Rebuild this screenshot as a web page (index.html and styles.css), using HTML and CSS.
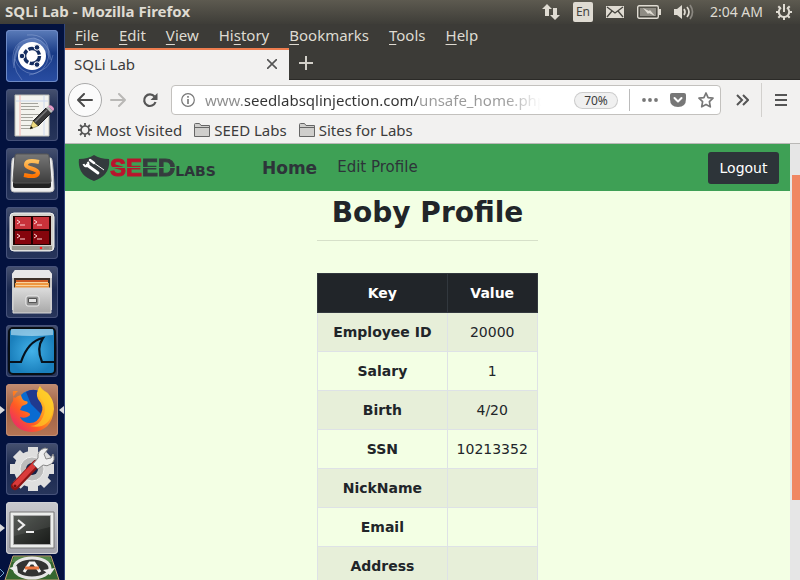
FILE: index.html
```html
<!DOCTYPE html>
<html lang="en">
<head>
<meta charset="utf-8">
<title>SQLi Lab</title>
<link rel="stylesheet" href="styles.css">
</head>
<body>
<header class="panel">
  <span class="panel-title">SQLi Lab - Mozilla Firefox</span>
  <div class="indicators">
    <svg class="ind-net" width="18" height="16" viewBox="0 0 18 16" fill="#dfdbd2"><path d="M5 0l5 5H7v7H3V5H0zM13 16l-5-5h3V4h4v7h3z"/></svg>
    <span class="lang">En</span>
    <svg class="ind-mail" width="18" height="12" viewBox="0 0 18 12"><path fill="#dfdbd2" d="M0 0h18v12H0z"/><path d="M1 1l8 6 8-6M1 11l5-6M17 11l-5-6" fill="none" stroke="#45443e" stroke-width="1.3"/></svg>
    <svg class="ind-battery" width="24" height="14" viewBox="0 0 24 14"><rect x=".7" y=".7" width="20.6" height="12.6" rx="1.5" fill="none" stroke="#dfdbd2" stroke-width="1.4"/><path fill="#8e8b83" d="M3 3h16v8H3z"/><path fill="#dfdbd2" d="M22 4h2v6h-2zM6 3l6 3 1-1 5 6-6-3-1 1z"/></svg>
    <svg class="ind-volume" width="20" height="16" viewBox="0 0 20 16"><path fill="#dfdbd2" d="M0 5h3l5-4v14l-5-4H0z"/><g fill="none" stroke-width="1.7"><path stroke="#dfdbd2" d="M10 5q2 3 0 6M13 3q4 5 0 10"/><path stroke="#8a8780" d="M16 1q5 7 0 14"/></g></svg>
    <span class="clock">2:04 AM</span>
    <svg class="ind-power" width="16" height="16" viewBox="0 0 16 16"><g fill="none" stroke="#dfdbd2" stroke-width="2"><path d="M5 3.6a5.2 5.2 0 1 0 6 0M8 0v8"/><path d="M8 13v3M0 8h3M13 8h3M2.3 2.3l2 2M13.7 2.3l-2 2M2.3 13.7l2-2M13.7 13.7l-2-2"/></g></svg>
  </div>
</header>
<div class="desktop">
  <nav class="launcher" aria-label="Launcher">
    <button class="tile tile-dash" aria-label="Search">
      <svg viewBox="0 0 52 52"><g fill="none" stroke="#c3d2f2" stroke-opacity=".3" stroke-width="1"><path d="M8 38Q2 10 28 8Q44 12 45 30M16 50Q2 34 13 16M21 5Q43 3 43 26Q40 43 23 45M9 29Q13 42 27 44Q45 39 47 25"/></g><path fill="#9eb8eb" opacity=".3" d="M8 37Q5 8 29 8Q44 12 44 31Q36 9 21 14Q10 20 8 37"/><circle cx="26" cy="26" r="14" fill="#fff"/><circle cx="26" cy="26" r="7.500" fill="none" stroke="#142d60" stroke-width="3.400" stroke-dasharray="14 1.700"/><g fill="#142d60" stroke="#fff" stroke-width="1"><circle cx="16" cy="26" r="2.800"/><circle cx="31" cy="17.400" r="2.800"/><circle cx="31" cy="34.600" r="2.800"/></g></svg>
    </button>
    <button class="tile" aria-label="Text Editor">
      <svg viewBox="0 0 52 52"><path fill="#f3f3ee" stroke="#bcbdb4" d="M9 6h34v41H9z"/><path stroke="#f3b4b0" d="M14 6v41"/><path d="M38 6v41M10 12h32" stroke="#ccd9ee"/><g stroke="#a4a49d"><path d="M15 14.500h17M15 17.500h18M15 20.500h14M15 25.500h18M15 28.500h12M15 31.500h16M15 36.500h15M15 39.500h12"/></g><path fill="#3a3a3a" stroke="#1f1f1f" d="M27 32L40 19l5 5-13 13z"/><path stroke="#777" stroke-width="1.500" d="M29 33l12-12"/><path fill="#f1dc80" stroke="#6b642a" stroke-width=".5" d="M27 32l-3 8 8-3z"/><path d="M24 40l1-3 2 2z"/><path fill="#bbb" d="M40 19l2-2 5 5-2 2z"/><path fill="#e79bc7" d="M42 17q3-2 5 1 2 2 0 4z"/></svg>
    </button>
    <button class="tile" aria-label="Sublime Text">
      <svg viewBox="0 0 52 52"><defs><linearGradient id="sub" x2="0" y2="1"><stop stop-color="#777"/><stop offset="1" stop-color="#3d3d3d"/></linearGradient><linearGradient id="orange" x2="0" y2="1"><stop stop-color="#ffc15d"/><stop offset="1" stop-color="#ff7300"/></linearGradient></defs><path fill="#eee" stroke="#bbb" d="M7 10q-2 0-2 31 0 3 3 3h36q4 0 4-3Q47 10 45 10z"/><path fill="#222" d="M7 33h38v5q0 2-2 2H9q-2 0-2-2z"/><path fill="url(#sub)" stroke="#555" d="M11 6h30q2 0 2 2l2 25q0 2-2 2H9q-2 0-2-2L9 8q0-2 2-2"/><path fill="none" stroke="url(#orange)" stroke-width="4" d="M33 14q-13-3-13 3c0 4 12 3 12 8q-1 5-14 2"/></svg>
    </button>
    <button class="tile" aria-label="Terminator">
      <svg viewBox="0 0 52 52"><rect x="4" y="6" width="44" height="38" rx="4" fill="#d2d2cc" stroke="#f1f1ef"/><path fill="#999990" d="M6 39h40v4H6z"/><path fill="#230303" d="M7 9h38v29H7z"/><path fill="#c8323a" d="M9 10h16v12H9zM27 10h16v12H27z"/><path fill="#85050c" d="M9 24h16v13H9zM27 24h16v13H27z"/><g fill="none" stroke="#ffd4d4"><path d="M11 13l3 2-3 2M14 18h5M28 13l3 2-3 2M31 18h5M11 27l3 2-3 2M14 32h5M28 27l3 2-3 2M31 32h5"/></g><circle cx="35" cy="41" r="1.300" fill="#ff2020"/><path stroke="#85857d" d="M38 41h5"/></svg>
    </button>
    <button class="tile" aria-label="Files">
      <svg viewBox="0 0 52 52"><defs><linearGradient id="cab" x2="0" y2="1"><stop stop-color="#dcdcdc"/><stop offset="1" stop-color="#a8a8a8"/></linearGradient></defs><path fill="#c7c7c7" d="M6 8l3-4h34l3 4v36H6z"/><path fill="#e8e8e8" d="M6 8l3-4h34l3 4v4H6z"/><path fill="#3d312a" d="M8 12h36v11H8z"/><path fill="#d05c24" d="M10 14h32v9H10z"/><path fill="#ee9740" d="M9 17h34v6H9z"/><path stroke="#f8d29d" d="M10 16.500h32M10 19.500h32"/><path fill="url(#cab)" stroke="#d8d8d8" d="M7 22h38v25H7z"/><rect x="20" y="30" width="13" height="10" rx="2" fill="#8f8f8f" stroke="#eee"/><path fill="#e4e4e4" stroke="#555" d="M22.500 32.500h8v4h-8z"/></svg>
    </button>
    <button class="tile" aria-label="Wireshark">
      <svg viewBox="0 0 52 52"><defs><radialGradient id="sea"><stop stop-color="#43b2e9"/><stop offset="1" stop-color="#1a7fbc"/></radialGradient></defs><rect x="3" y="3" width="46" height="46" rx="4" fill="url(#sea)" stroke="#080e14" stroke-width="2"/><path fill="#d7f0fc" opacity=".55" d="M5 4h42v6Q26 12 5 10z"/><path fill="none" stroke="#06121d" stroke-width="2.200" d="M4 37h11Q22 16 37 13q-7 10-1 24h12"/></svg>
    </button>
    <button class="tile tile-firefox active" aria-label="Firefox">
      <svg viewBox="0 0 52 52"><defs><linearGradient id="fox" x1="1" y1="0" x2="0" y2="1"><stop stop-color="#fff44f"/><stop offset=".35" stop-color="#ffad20"/><stop offset=".65" stop-color="#ff5a24"/><stop offset="1" stop-color="#e31587"/></linearGradient></defs><circle cx="27" cy="23" r="17" fill="#096bd1"/><path fill="#203a8f" d="M20 8q10-6 19 4 8 9 0 22L25 20z"/><path fill="url(#fox)" d="M12 7Q7 11 7 17 3 22 4 29q3 18 22 19 20-1 22-23 0-10-7-16-7-4-7-7-5 7-2 13 7 8 3 15-3 9-11 9-8 0-10-6 5 2 9-1 3-2-2-4l-7-2 2-4 5-2q2-3-2-3-3-1-4-6-4 1-6 3-3-2-2-7"/><path fill="#ffcb24" opacity=".7" d="M34 2q-4 9 3 16 4 7 0 15-4 9-13 9 17 4 22-12 3-12-4-21-7-4-8-7"/></svg>
    </button>
    <button class="tile" aria-label="System Settings">
      <svg viewBox="0 0 52 52"><g fill="#dedede"><path d="M22 4h10v44H22zM4 21h44v10H4z"/><path d="M22 4h10v44H22zM4 21h44v10H4z" transform="rotate(45 26 26)"/><circle cx="26" cy="26" r="18"/></g><circle cx="26" cy="26" r="12" fill="#bcbcbc" stroke="#eee"/><circle cx="26" cy="26" r="6" fill="#142248"/><path stroke="#8d1414" stroke-width="8" stroke-linecap="round" d="M9 43l21-22"/><path stroke="#da3b3b" stroke-width="5" stroke-linecap="round" d="M9 42l20-21"/><path fill="#eee" stroke="#888" d="M27 21l5-6q-1-8 7-10l3 1-4 5 2 5 5-1 2-4q3 6-2 10-4 3-8 1l-5 4z"/><circle cx="9" cy="43" r="1.500" fill="#6b1010"/></svg>
    </button>
    <button class="tile tile-terminal running" aria-label="Terminal">
      <svg viewBox="0 0 52 52"><defs><linearGradient id="term" x2="1" y2="1"><stop stop-color="#494e49"/><stop offset="1" stop-color="#191b19"/></linearGradient></defs><path fill="#eceeec" stroke="#777" d="M4 10h44v36H4z"/><path fill="url(#term)" stroke="#aaa" d="M7.500 13.500h37v29h-37z"/><path fill="none" stroke="#eee" stroke-width="2.200" d="M12 18l6 5-6 5M20 30h8"/><path fill="#fff" opacity=".08" d="M8 14h36v11L8 34z"/></svg>
    </button>
    <button class="tile-folded" aria-label="Software Updater">
      <svg viewBox="0 0 64 25"><path fill="#35672f" stroke="#c3a276" d="M13 1h38l8 24H5z"/><path fill="#52864a" d="M14 2h36l2 5H12z"/><ellipse cx="32" cy="13" rx="18" ry="10" fill="#333" stroke="#e5e5e5" stroke-width="3"/><path fill="none" stroke="#f6f6f6" stroke-width="3" d="M24 17l6-9h4l6 9"/><path stroke="#e9753f" stroke-width="3" d="M25 13h14"/><path fill="#eee" d="M9 13l8-2 1 7zM55 13l-12 2 7 5z"/><path fill="none" stroke="#6fa4cf" d="M0 14l4 4-4 4"/></svg>
    </button>
  </nav>
  <section class="browser">
    <nav class="menubar">
      <button><u>F</u>ile</button><button><u>E</u>dit</button><button><u>V</u>iew</button><button>Hi<u>s</u>tory</button><button><u>B</u>ookmarks</button><button><u>T</u>ools</button><button><u>H</u>elp</button>
    </nav>
    <div class="tabs">
      <div class="tab"><span>SQLi Lab</span><button class="icon-btn" aria-label="Close tab"><svg width="10" height="10" viewBox="0 0 10 10"><path stroke="#555" stroke-width="1.600" d="M0 0l10 10M10 0L0 10"/></svg></button></div>
      <button class="icon-btn new-tab" aria-label="New tab"><svg width="14" height="14" viewBox="0 0 14 14"><path stroke="#d3d0c9" stroke-width="2" d="M7 0v14M0 7h14"/></svg></button>
    </div>
    <div class="toolbar">
      <button class="icon-btn back" aria-label="Back"><svg width="16" height="14" viewBox="0 0 16 14"><path fill="none" stroke="#4b4b4b" stroke-width="2" stroke-linecap="round" stroke-linejoin="round" d="M7 1L1 7l6 6M1 7h14"/></svg></button>
      <button class="icon-btn forward" aria-label="Forward"><svg width="16" height="14" viewBox="0 0 16 14"><path fill="none" stroke="#b9b8b6" stroke-width="2" stroke-linecap="round" stroke-linejoin="round" d="M9 1l6 6-6 6M15 7H1"/></svg></button>
      <button class="icon-btn reload" aria-label="Reload"><svg width="16" height="16" viewBox="0 0 16 16"><path fill="none" stroke="#555" stroke-width="2.200" d="M12.500 4.500A5.800 5.800 0 1 0 13.500 10"/><path fill="#555" d="M15.500 1v7h-7z"/></svg></button>
      <div class="urlbar">
        <svg width="14" height="14" viewBox="0 0 14 14"><circle cx="7" cy="7" r="6.300" fill="none" stroke="#777" stroke-width="1.200"/><path stroke="#777" stroke-width="1.600" d="M7 6v5M7 3v1.700"/></svg>
        <input class="url" type="text" aria-label="Address" value="www.seedlabsqlinjection.com/unsafe_home.php">
        <button class="zoom">70%</button>
        <span class="divider"></span>
        <button class="icon-btn" aria-label="Page actions"><svg width="16" height="4" viewBox="0 0 16 4" fill="#777"><circle cx="2" cy="2" r="1.900"/><circle cx="8" cy="2" r="1.900"/><circle cx="14" cy="2" r="1.900"/></svg></button>
        <button class="icon-btn" aria-label="Save to Pocket"><svg width="16" height="14" viewBox="0 0 16 14"><path fill="#777" d="M2 0h12q2 0 2 2v4q0 8-8 8T0 6V2q0-2 2-2"/><path fill="none" stroke="#fff" stroke-width="2" stroke-linecap="round" stroke-linejoin="round" d="M4.500 5L8 8.500 11.500 5"/></svg></button>
        <button class="icon-btn" aria-label="Bookmark this page"><svg width="16" height="16" viewBox="0 0 16 16"><path fill="none" stroke="#777" stroke-width="1.700" stroke-linejoin="round" d="M8 1l2.100 4.600 4.900.6-3.600 3.500.9 5.100L8 12.400l-4.300 2.400.9-5.100L1 6.200l4.900-.6z"/></svg></button>
      </div>
      <button class="icon-btn overflow" aria-label="More tools"><svg width="13" height="12" viewBox="0 0 13 12"><path fill="none" stroke="#555" stroke-width="2" d="M1 1l5 5-5 5M7 1l5 5-5 5"/></svg></button>
      <button class="icon-btn menu" aria-label="Open menu"><svg width="12" height="12" viewBox="0 0 12 12"><path stroke="#555" stroke-width="2" d="M0 1h12M0 6h12M0 11h12"/></svg></button>
    </div>
    <div class="bookmarks">
      <a href="#"><svg width="14" height="14" viewBox="0 0 14 14"><circle cx="7" cy="7" r="4" fill="none" stroke="#555" stroke-width="1.700"/><path stroke="#555" stroke-width="1.800" d="M7 0v3M7 11v3M0 7h3M11 7h3M2 2l2 2M10 10l2 2M12 2l-2 2M4 10l-2 2"/></svg>Most Visited</a>
      <a href="#"><svg width="16" height="14" viewBox="0 0 16 14"><path fill="#cfcecc" stroke="#666" d="M.5 13.500V1.500q0-1 1-1h4l1.500 2h8.500v11zM.5 4.500h15"/></svg>SEED Labs</a>
      <a href="#"><svg width="16" height="14" viewBox="0 0 16 14"><path fill="#cfcecc" stroke="#666" d="M.5 13.500V1.500q0-1 1-1h4l1.500 2h8.500v11zM.5 4.500h15"/></svg>Sites for Labs</a>
    </div>
    <div class="viewport">
      <div class="page">
        <nav class="site-nav">
          <a class="logo" href="#"><svg width="32" height="26" viewBox="0 0 32 26"><path fill="#333a3d" d="M16 0Q22 4 31 4q2 16-15 22Q-1 20 1 4q9 0 15-4"/><path stroke="#fff" stroke-width="2.800" stroke-linecap="round" d="M9 10l11 8"/><path fill="none" stroke="#fff" stroke-width="2" d="M5.500 9q1 3 4 2 2-2 0-4"/><path stroke="#fff" stroke-width="2.400" stroke-linecap="round" d="M12 5l4 3"/><path stroke="#fff" stroke-width="1" d="M16 8l10 7"/></svg><span class="logo-seed"><span class="logo-red">SE</span><span class="logo-dark">ED</span></span><span class="logo-labs">LABS</span></a>
          <a class="nav-home" href="#">Home</a>
          <a class="nav-edit" href="#">Edit Profile</a>
          <button class="logout">Logout</button>
        </nav>
        <main class="profile">
          <h1>Boby Profile</h1>
          <table>
            <thead><tr><th scope="col">Key</th><th scope="col">Value</th></tr></thead>
            <tbody>
              <tr><th scope="row">Employee ID</th><td>20000</td></tr>
              <tr><th scope="row">Salary</th><td>1</td></tr>
              <tr><th scope="row">Birth</th><td>4/20</td></tr>
              <tr><th scope="row">SSN</th><td>10213352</td></tr>
              <tr><th scope="row">NickName</th><td></td></tr>
              <tr><th scope="row">Email</th><td></td></tr>
              <tr><th scope="row">Address</th><td></td></tr>
            </tbody>
          </table>
        </main>
      </div>
      <div class="scrollbar"><div class="thumb"></div></div>
    </div>
  </section>
</div>
</body>
</html>
```
FILE: styles.css
```css
* { box-sizing: border-box; }
body {
  margin: 0;
  height: 100vh;
  display: flex;
  flex-direction: column;
  overflow: hidden;
  font: 15px/20px "Noto Sans", "Open Sans", sans-serif;
  color: #3c3c3c;
}
svg { display: block; flex: none; }
button { border: 0; padding: 0; background: none; font: inherit; color: inherit; }
a { color: inherit; text-decoration: none; }

.panel {
  flex: none;
  height: 24px;
  padding: 0 8px 0 5px;
  display: flex;
  align-items: center;
  justify-content: space-between;
  background: linear-gradient(#5d5a50, #3e3d38);
  color: #dfdbd2;
}
.panel-title { padding-bottom: 2px; font-weight: 700; }
.indicators { display: flex; align-items: center; gap: 13px; font-size: 14px; }
.lang {
  width: 20px;
  border-radius: 2px;
  background: #dfdbd2;
  color: #45443e;
  font-size: 12px;
  text-align: center;
}
.clock { padding-left: 3px; }

.desktop { flex: 1; min-height: 0; display: flex; }
.launcher {
  flex: none;
  width: 65px;
  padding-top: 6px;
  display: flex;
  flex-direction: column;
  align-items: center;
  gap: 7px;
  overflow: hidden;
  background: #03123f;
  border-right: 1px solid #32477c;
}
.tile {
  flex: none;
  position: relative;
  width: 52px;
  height: 52px;
  border-radius: 4px;
  background: linear-gradient(#46516f, #1b2950 45%, #27355b);
  box-shadow: inset 0 0 0 1px #46527a;
}
.tile svg { width: 52px; height: 52px; }
.tile-dash { background: linear-gradient(#5b7cb9, #193b87 45%, #294da2); box-shadow: inset 0 0 0 1px #6e8ac6; }
.tile-firefox { background: linear-gradient(#c18c71, #9e6042 45%, #b57555); box-shadow: inset 0 0 0 1px #c08c72; }
.tile-terminal { background: linear-gradient(#c8c9cd, #a1a2aa); box-shadow: inset 0 0 0 1px #cfd0d4; }
.active::before, .running::before, .active::after {
  content: "";
  position: absolute;
  top: 22px;
  border: 4px solid transparent;
}
.active::before, .running::before { left: -6px; border-left: 5px solid #d9dadd; border-right: 0; }
.active::after { right: -6px; border-right: 5px solid #d9dadd; border-left: 0; }
.tile-folded { flex: none; width: 64px; margin-top: -6px; }

.browser { flex: 1; min-width: 0; display: flex; flex-direction: column; background: #f2f1f0; }
.menubar {
  height: 24px;
  padding: 0 10px 2px;
  display: flex;
  align-items: center;
  gap: 20px;
  background: #3c3b37;
  color: #dfdbd2;
}
.menubar u { text-underline-offset: 3px; }
.tabs { height: 32px; display: flex; align-items: stretch; background: #3c3b37; border-bottom: 1px solid #2b2a27; }
.tab {
  width: 224px;
  margin-bottom: -1px;
  padding: 0 12px 2px 9px;
  display: flex;
  align-items: center;
  justify-content: space-between;
  background: #f2f1f0;
  border-top: 2px solid #ee7d4f;
}
.icon-btn { flex: none; display: flex; align-items: center; justify-content: center; }
.new-tab { width: 34px; padding-bottom: 2px; }
.toolbar { height: 40px; padding-left: 3px; display: flex; align-items: center; }
.back { width: 34px; height: 34px; border: 1px solid #aaa; border-radius: 50%; background: #fbfbfb; }
.forward { width: 32px; }
.reload { width: 32px; }
.urlbar {
  flex: 1;
  min-width: 0;
  height: 30px;
  margin-left: 5px;
  padding: 0 6px 0 9px;
  display: flex;
  align-items: center;
  gap: 12px;
  background: #fff;
  border: 1px solid #c3c1be;
  border-radius: 4px;
}
.url {
  flex: 1;
  min-width: 0;
  border: 0;
  padding: 0;
  outline: 0;
  margin: 0 22px 0 -2px;
  font: inherit;
  background: linear-gradient(90deg, #8c8c8c 40px, #333 40px, #333 215px, #999 215px, #999 300px, transparent 336px);
  background-clip: text;
  -webkit-background-clip: text;
  -webkit-text-fill-color: transparent;
}
.zoom {
  width: 42px;
  height: 15px;
  border-radius: 8px;
  background: #f0f0f0;
  box-shadow: 0 0 0 1px #ccc;
  font-size: 12px;
  line-height: 15px;
}
.divider { width: 1px; height: 22px; background: #bbb; }
.overflow { width: 40px; padding-left: 3px; }
.menu { width: 39px; height: 34px; border-left: 1px solid #d2d0cd; }
.bookmarks {
  height: 24px;
  padding: 0 13px 3px;
  display: flex;
  align-items: center;
  gap: 12px;
  border-bottom: 1px solid #b9b8b6;
}
.bookmarks a { display: flex; align-items: center; gap: 4px; white-space: nowrap; }

.viewport { flex: 1; min-height: 0; display: flex; overflow: hidden; }
.page { flex: 1; min-width: 0; background: #f3ffe4; color: #212529; font-family: "DejaVu Sans", sans-serif; font-size: 14px; }
.site-nav { height: 47px; padding: 0 11px 0 13px; display: flex; align-items: center; background: #3ea055; color: #2d3439; }
.logo { width: 184px; display: flex; align-items: center; font-weight: 700; }
.logo-seed { font: 700 24px/26px "Liberation Sans", sans-serif; }
.logo-seed span { background-clip: text; -webkit-background-clip: text; color: transparent; -webkit-text-stroke: 1px transparent; }
.logo-red { background-image: linear-gradient(#b9132c 13px, #3ea055 13px, #3ea055 14px, #b9132c 14px); }
.logo-dark { background-image: linear-gradient(#353c3e 13px, #3ea055 13px, #3ea055 14px, #353c3e 14px); }
.logo-labs { padding-top: 6px; }
.nav-home { font-size: 17px; font-weight: 700; }
.nav-edit { margin-left: 20px; padding-bottom: 2px; font-size: 15px; }
.logout { width: 71px; height: 32px; margin-left: auto; border-radius: 3px; background: #2d3439; color: #fff; }
.profile { width: max-content; margin: 0 auto; }
h1 {
  margin: 0 0 32px;
  padding: 5px 0 11px;
  border-bottom: 1px solid #d6e0c9;
  font-size: 28px;
  line-height: 33px;
  text-align: center;
}
table { border-collapse: collapse; text-align: center; line-height: 22px; }
th, td { height: 39px; padding: 8px 9px; border: 1px solid #dee2e6; }
tbody th { padding: 8px 15px; }
thead th { background: #212529; color: #fff; border-color: #32383e; }
tbody tr:nth-child(odd) { background: #e7efd9; }
.scrollbar { flex: none; width: 10px; padding: 31px 0 0 2px; background: #e6e6e6; }
.thumb { height: 325px; background: #f08763; }
```
